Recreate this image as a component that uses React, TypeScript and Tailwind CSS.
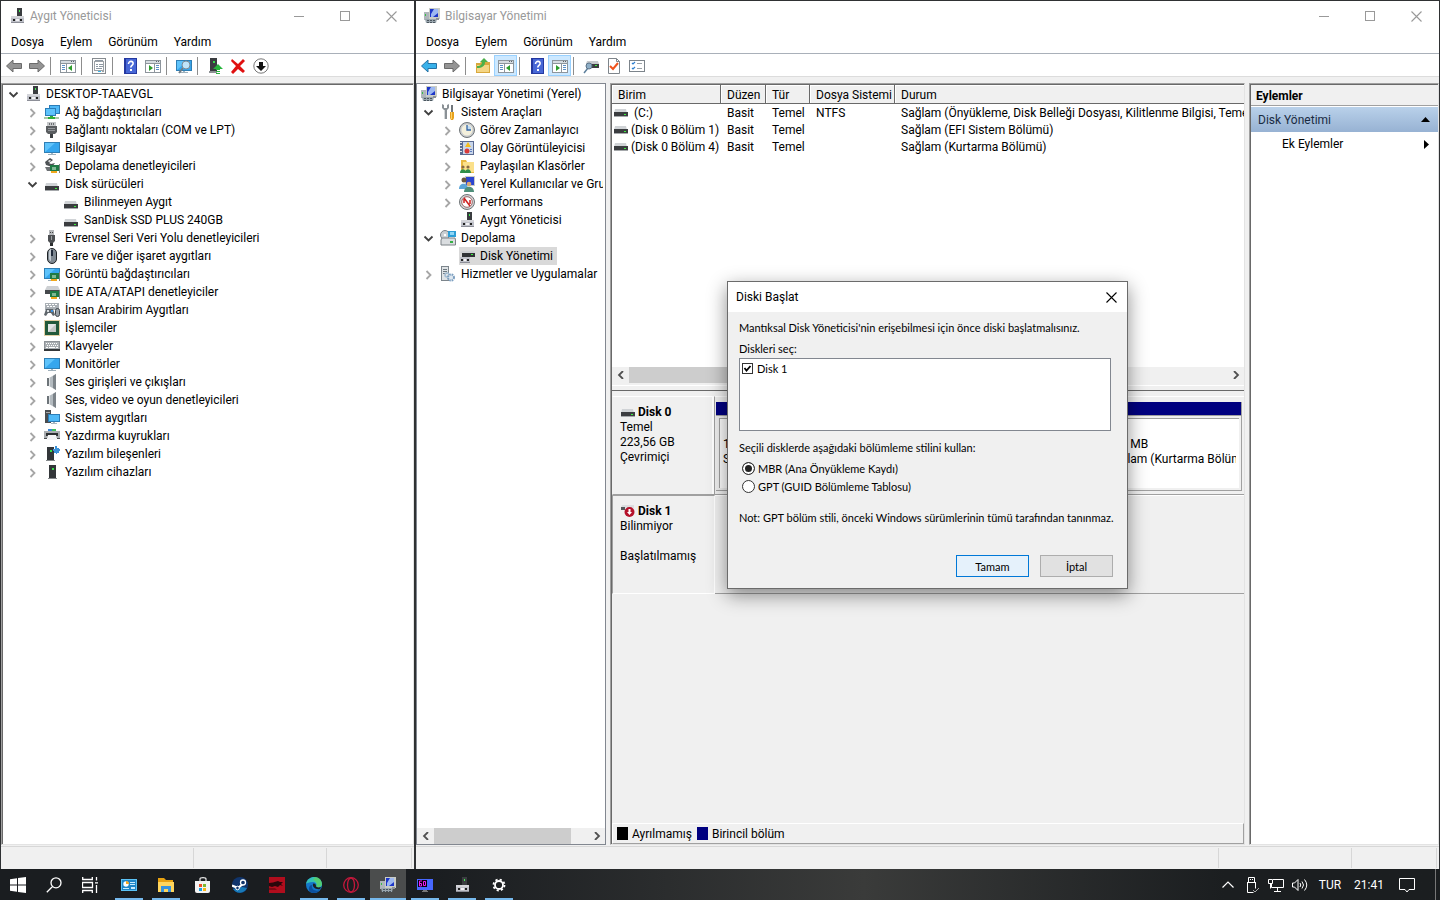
import { useState } from 'react';
import type { ReactNode } from 'react';
import clsx from 'clsx';

type IconName = keyof typeof icons;

type TreeItem = {
  label: string;
  icon: IconName;
  open?: boolean;
  selected?: boolean;
  closed?: boolean;
  children?: TreeItem[];
};

// Shared drawings
const screen = (
  <>
    <rect x="0" y="2" width="16" height="11" fill="#2f7fb5" />
    <rect x="1" y="3" width="14" height="9" fill="#5ec3fb" />
    <path d="M1 12 11 3h4v9z" fill="#35a6ee" />
    <rect x="7" y="13" width="2" height="1" fill="#9fb6c4" />
    <rect x="4" y="14" width="8" height="1" fill="#9fb0bb" />
  </>
);

const card = (
  <>
    <rect x="6" y="7" width="9" height="6" fill="#1f7a45" />
    <rect x="8" y="9" width="4" height="3" fill="#7fb894" />
    <rect x="15" y="6" width="1" height="9" fill="#7a8480" />
    <rect x="7" y="13" width="6" height="2" fill="#f0a81c" />
  </>
);

const drive = (
  <>
    <path d="M2 7h11l1 4H1z" fill="#d0d3d6" />
    <rect x="1" y="10" width="14" height="4" fill="#3b3d40" />
    <rect x="1" y="14" width="14" height="1" fill="#a5a8ab" />
    <rect x="11" y="12" width="2" height="1" fill="#3df03d" />
  </>
);

const speaker = (
  <>
    <path d="M3 4h4v8H3z" fill="#6d7479" />
    <path d="M5 4 12 0v16L5 12z" fill="#b4bbc0" />
    <path d="M9 2 12 0v16l-3-2z" fill="#7d848a" />
    <path d="M5 4h1v8H5z" fill="#e0e3e5" />
  </>
);

const tower = (
  <>
    <rect x="5" y="1" width="7" height="13" fill="#333639" />
    <rect x="8" y="4" width="2" height="2" fill="#35e04a" />
    <rect x="4" y="14" width="9" height="1" fill="#85898c" />
  </>
);

const paneFrame = (
  <>
    <rect x="0" y="2" width="16" height="13" fill="#8d959c" />
    <rect x="1" y="3" width="14" height="2" fill="#d5dbe0" />
    <rect x="11" y="3" width="1" height="1" fill="#5c646b" />
    <rect x="13" y="3" width="1" height="1" fill="#5c646b" />
    <rect x="1" y="6" width="14" height="8" fill="#fff" />
  </>
);

const manager = (
  <>
    <rect x="5" y="0" width="11" height="11" fill="#c9ccc6" />
    <rect x="6" y="1" width="8" height="8" fill="#1c35c8" />
    <path d="M10 1h4v4L9 9H7V6z" fill="#9db8f2" />
    <rect x="0" y="4" width="5" height="8" fill="#aeb5ba" />
    <rect x="1" y="6" width="1" height="2" fill="#35c046" />
    <path d="M1 11h12l-1 4H2z" fill="#9aa6ae" />
    <path d="M3 12h2v1H3zM6 12h2v1H6zM9 12h2v1H9zM3 14h2v1H3zM6 14h2v1H6zM9 14h2v1H9z" fill="#4b565e" />
    <rect x="12" y="10" width="3" height="2" fill="#8d9195" />
  </>
);

const icons = {
  device: (
    <>
      <rect x="8" y="0" width="5" height="9" fill="#3a3d40" />
      <rect x="10" y="2" width="1" height="2" fill="#3ff04f" />
      <rect x="2" y="8" width="13" height="7" fill="#bfc1c9" />
      <rect x="2" y="8" width="13" height="2" fill="#d4d5da" />
      <rect x="4" y="11" width="2" height="2" fill="#222" />
      <rect x="11" y="11" width="2" height="2" fill="#222" />
      <rect x="7" y="11" width="3" height="2" fill="#f2f2f5" />
      <rect x="2" y="14" width="13" height="1" fill="#8d8f98" />
    </>
  ),
  network: (
    <>
      <rect x="5" y="1" width="11" height="9" fill="#2b7db8" />
      <rect x="6" y="2" width="9" height="7" fill="#4fb9f7" />
      <rect x="1" y="4" width="11" height="8" fill="#2b7db8" />
      <rect x="2" y="5" width="9" height="6" fill="#5ec3fb" />
      <path d="M0 13h5v2H0zM10 13h5v2h-5z" fill="#a8c9a8" />
      <path d="M6 12h3v1h2v2H4v-2h2z" fill="#2fae37" />
    </>
  ),
  port: (
    <>
      <rect x="3" y="0" width="9" height="4" fill="#c6c8ca" />
      <path d="M5 1h1v2H5zM7 1h1v2H7zM9 1h1v2H9z" fill="#6c6f72" />
      <path d="M2 4h11v6l-2 2H4l-2-2z" fill="#5a5d60" />
      <rect x="4" y="6" width="7" height="1" fill="#93969a" />
      <rect x="4" y="8" width="7" height="1" fill="#93969a" />
      <rect x="6" y="12" width="3" height="4" fill="#3c3f42" />
    </>
  ),
  monitor: screen,
  storage: (
    <>
      <path d="M1 4 6 0l3 2-4 3 2 1 4-1-3 4-6-2z" fill="#4d5154" />
      <path d="M4 3 6 2l1 1-2 1z" fill="#fff" />
      <path d="M1 9h5v4H3z" fill="#6c7073" />
      {card}
    </>
  ),
  drive,
  // Same drive, sitting in the middle of a text line
  volume: <g transform="translate(0 -3)">{drive}</g>,
  usb: (
    <>
      <rect x="5" y="0" width="5" height="5" fill="#b6b9bc" />
      <path d="M6 2h1v1H6zM8 2h1v1H8z" fill="#444" />
      <path d="M4 5h7v6l-2 2H6l-2-2z" fill="#4c4f52" />
      <rect x="7" y="6" width="1" height="4" fill="#9ba0a3" />
      <rect x="6" y="13" width="3" height="3" fill="#2c2e30" />
    </>
  ),
  mouse: (
    <>
      <rect x="3.5" y="0.5" width="9" height="15" rx="4.5" fill="#7f8992" stroke="#1f2326" />
      <path d="M5 4c0-2 1-3 2-3v12c-1 0-2-1-2-3z" fill="#c5ccd2" />
      <rect x="7" y="2" width="2" height="6" fill="#1f2a3a" />
    </>
  ),
  display: (
    <>
      {screen}
      {card}
    </>
  ),
  ide: (
    <>
      <path d="M3 2h11l2 4H1z" fill="#cdd0d3" />
      <rect x="1" y="6" width="14" height="4" fill="#46494c" />
      {card}
    </>
  ),
  hid: (
    <>
      <rect x="1" y="1" width="14" height="7" fill="#aab0b5" />
      <path d="M2 2h2v1H2zM5 2h2v1H5zM8 2h2v1H8zM11 2h2v1h-2zM3 4h2v1H3zM6 4h2v1H6zM9 4h2v1H9z" fill="#fff" />
      <path d="M2 7h7l2 6-2 1-2-3H4l-2 3-2-1z" fill="#5f666c" />
      <rect x="3" y="8" width="2" height="2" fill="#d8dde0" />
      <rect x="7" y="8" width="2" height="2" fill="#3a91e0" />
      <rect x="11.500" y="6.500" width="4" height="8" rx="2" fill="#9aa2a9" stroke="#3f464b" />
    </>
  ),
  cpu: (
    <>
      <rect x="0.500" y="0.500" width="15" height="15" fill="none" stroke="#c7a04a" strokeDasharray="1 1" />
      <rect x="1" y="1" width="14" height="14" fill="#22593a" />
      <rect x="4" y="4" width="8" height="8" fill="#c4c7c5" />
      <path d="M4 12 12 4H4z" fill="#e4e6e5" />
    </>
  ),
  keyboard: (
    <>
      <rect x="0" y="3" width="16" height="10" fill="#8d9297" />
      <rect x="1" y="4" width="14" height="7" fill="#a9aeb2" />
      <rect x="0" y="11" width="16" height="2" fill="#33373a" />
      <path d="M2 5h1v1H2zM4 5h1v1H4zM6 5h1v1H6zM8 5h1v1H8zM10 5h1v1h-1zM12 5h1v1h-1zM3 7h1v1H3zM5 7h1v1H5zM7 7h1v1H7zM9 7h1v1H9zM11 7h1v1h-1zM13 7h1v1h-1zM2 9h2v1H2zM5 9h6v1H5zM12 9h2v1h-2z" fill="#fff" />
    </>
  ),
  speaker,
  system: (
    <>
      <rect x="1" y="0" width="6" height="13" fill="#4a4d50" />
      <rect x="2" y="2" width="4" height="1" fill="#a6a9ac" />
      <rect x="4" y="4" width="12" height="8" fill="#2b7db8" />
      <rect x="5" y="5" width="10" height="6" fill="#4fb9f7" />
      <path d="M9 12h2v1h2v1H7v-1h2z" fill="#a9b7c0" />
    </>
  ),
  printer: (
    <>
      <rect x="4" y="1" width="8" height="3" fill="#3a86d8" />
      <rect x="8" y="1" width="4" height="2" fill="#3fc05a" />
      <rect x="0" y="3" width="16" height="7" fill="#a9adb0" />
      <rect x="2" y="5" width="12" height="3" fill="#2c2f31" />
      <path d="M4 7h8l1 5H3z" fill="#f3f4f5" />
      <path d="M0 10h3v1H0zM13 10h3v1h-3z" fill="#4a4d50" />
    </>
  ),
  component: (
    <>
      <g transform="translate(-2 0)">{tower}</g>
      <path d="M11 0h2v2h2v1h1v2h-1v2h-2v1h-1V7h-2V5H9V3h2z" fill="#3c93d8" />
    </>
  ),
  tower,
  manager,
  tools: (
    <>
      <path d="M2 0v4l2 2v9h3V6l2-2V0L7 1v3H4V1z" fill="#8b9196" />
      <path d="M4 6h1v9H4z" fill="#d5d8da" />
      <path d="M11 1h2v7h-2z" fill="#70767b" />
      <path d="M10 8h4v6l-1 2h-2l-1-2z" fill="#e8a11c" />
      <path d="M11 8h1v7h-1z" fill="#f9d36b" />
    </>
  ),
  clock: (
    <>
      <circle cx="8" cy="8" r="7.500" fill="#c9ccce" stroke="#6e7376" />
      <circle cx="8" cy="8" r="5.500" fill="#f4f0dc" />
      <path d="M8 8V3l4 2v3z" fill="#c3dcf2" />
      <path d="M8 3v5h4" fill="none" stroke="#3465a4" strokeWidth="1.300" />
    </>
  ),
  events: (
    <>
      <rect x="1" y="1" width="14" height="14" fill="#5a6a92" />
      <rect x="4" y="2" width="10" height="12" fill="#c9d6ea" />
      <path d="M1 2h2v1H1zM1 5h2v1H1zM1 8h2v1H1zM1 11h2v1H1z" fill="#e5e5e5" />
      <path d="M9 2 12 7H6z" fill="#f5bd1e" />
      <circle cx="8" cy="11" r="2.500" fill="#d93a3a" />
      <path d="M11 9h2v1h-2zM11 11h2v1h-2z" fill="#5d7cc0" />
    </>
  ),
  shared: (
    <>
      <path d="M2 2h5l1 2h7v11H2z" fill="#e9b942" />
      <path d="M4 4h11v10H4z" fill="#fbe08a" />
      <circle cx="4" cy="9" r="1.600" fill="#8a6a45" />
      <circle cx="9" cy="9" r="1.600" fill="#8a6a45" />
      <path d="M1 15c0-5 6-5 6 0zM6 15c0-5 6-5 6 0z" fill="#2f8e4a" />
    </>
  ),
  users: (
    <>
      <rect x="6" y="0" width="10" height="10" fill="#c9ccc6" />
      <rect x="7" y="1" width="8" height="8" fill="#2b45d0" />
      <circle cx="5" cy="4" r="2.500" fill="#6b563f" />
      <path d="M0 13c0-7 9-7 9 0z" fill="#5aa5d8" />
      <circle cx="10" cy="8" r="2.300" fill="#d9a873" />
      <path d="M5 16c0-7 10-7 10 0z" fill="#4f8f7a" />
    </>
  ),
  performance: (
    <>
      <circle cx="8" cy="8" r="7.500" fill="#d2d4d6" stroke="#6e7376" />
      <circle cx="8" cy="8" r="5.300" fill="#fff" stroke="#8d4a4a" strokeWidth=".8" />
      <path d="M5 4 11 12M5 5v4M11 6v4" fill="none" stroke="#cf2020" strokeWidth="1.500" />
    </>
  ),
  depot: (
    <>
      <circle cx="5" cy="5" r="4.500" fill="#c9ced2" stroke="#7b8287" />
      <circle cx="5" cy="5" r="1.200" fill="#fff" />
      <rect x="8" y="1" width="8" height="6" fill="#2e9ed6" />
      <rect x="10" y="2" width="4" height="3" fill="#8fd6f6" />
      <path d="M2 8h13l.5 2v5H1v-5z" fill="#dadde0" stroke="#7c8287" />
      <rect x="10" y="11" width="3" height="2" fill="#35b045" />
    </>
  ),
  diskManager: (
    <>
      <path d="M3 3h12l1 2H1z" fill="#cdd0d3" />
      <rect x="3" y="5" width="13" height="4" fill="#303336" />
      <rect x="12" y="6" width="2" height="1" fill="#3df03d" />
      <rect x="1" y="9" width="10" height="6" fill="#bfc1c9" />
      <rect x="2" y="11" width="2" height="2" fill="#222" />
      <rect x="8" y="11" width="2" height="2" fill="#222" />
      <rect x="5" y="11" width="2" height="2" fill="#f5f5f7" />
      <rect x="1" y="14" width="10" height="1" fill="#8d8f98" />
    </>
  ),
  services: (
    <>
      <rect x="1.500" y="0.500" width="7" height="14" fill="#dfe3e6" stroke="#7c858c" />
      <path d="M3 3h4v1H3zM3 5h4v1H3zM3 7h4v1H3z" fill="#6d7880" />
      <circle cx="7" cy="9" r="2" fill="none" stroke="#a3bcd2" strokeWidth="1.500" />
      <circle cx="11" cy="11.500" r="3" fill="#dfe8f0" stroke="#7c9fc0" strokeWidth="2" strokeDasharray="1.600 .8" />
    </>
  ),
  back: <path d="M.5 8 7 2v3.500h8.500v5H7V14z" fill="#949494" stroke="#6b6b6b" />,
  backBlue: <path d="M.5 8 7 2v3.500h8.500v5H7V14z" fill="#38b1ea" stroke="#2572a5" />,
  forward: <path d="M15.500 8 9 2v3.500H.5v5H9V14z" fill="#949494" stroke="#6b6b6b" />,
  treePane: (
    <>
      {paneFrame}
      <path d="M2 7h3v1H2zM2 9h3v1H2zM2 11h3v1H2z" fill="#5b8fc7" />
      <rect x="6" y="6" width="1" height="8" fill="#8d959c" />
      <path d="M12 7v6L8 10z" fill="#2c9c2c" />
    </>
  ),
  actionPane: (
    <>
      {paneFrame}
      <path d="M11 7h3v1h-3zM11 9h3v1h-3zM11 11h3v1h-3z" fill="#5b8fc7" />
      <rect x="9" y="6" width="1" height="8" fill="#8d959c" />
      <path d="M4 7v6l4-3z" fill="#2c9c2c" />
    </>
  ),
  properties: (
    <>
      <rect x="1.500" y="0.500" width="13" height="15" fill="#fbfbfb" stroke="#868b90" />
      <rect x="3.500" y="3.500" width="9" height="9" fill="#fff" stroke="#9da2a7" />
      <path d="M4 2h8v1H4zM5 6h2v1H5zM8 6h4v1H8zM5 8h2v1H5zM8 8h4v1H8zM5 10h6v1H5z" fill="#8d98a3" />
      <rect x="7" y="13" width="3" height="1" fill="#35b8ec" />
      <rect x="11" y="13" width="2" height="1" fill="#9da2a7" />
    </>
  ),
  help: (
    <>
      <rect x="2" y="0" width="13" height="16" fill="#2438a0" />
      <rect x="4" y="1" width="10" height="14" fill="#4767d6" />
      <path d="M6.500 6c0-3.700 5.500-3.200 4.500 0-.5 1.500-2.200 1.500-2.200 3.500" fill="none" stroke="#fff" strokeWidth="1.600" />
      <rect x="8" y="11" width="2" height="2" fill="#fff" />
    </>
  ),
  scan: (
    <>
      {screen}
      <path d="M7 10 3 15" stroke="#6f7c86" strokeWidth="2" />
      <circle cx="10" cy="7" r="4" fill="#bfe4fa" stroke="#7b8a95" />
    </>
  ),
  update: (
    <>
      <rect x="3" y="0" width="7" height="13" fill="#3a3d40" />
      <rect x="6" y="3" width="2" height="2" fill="#35e04a" />
      <rect x="2" y="13" width="8" height="2" fill="#8d9194" />
      <path d="M11 6 16 11h-3v1H9v-1H6zM9 13h4v1H9zM9 15h4v1H9z" fill="#27b53c" />
    </>
  ),
  remove: <path d="M2 1 8 6l5-5 2 2-5 5 5 5-2 2-5-4-5 5-2-2 5-6-5-5z" fill="#e01010" />,
  disable: (
    <>
      <circle cx="8" cy="8" r="7.200" fill="#fff" stroke="#777" />
      <path d="M6 4h4v4h3l-5 5-5-5h3z" fill="#111" />
    </>
  ),
  folderUp: (
    <>
      <path d="M1 5h4l1-1h9v11H1z" fill="#d9a83c" />
      <path d="M2 7h12v7H2z" fill="#f4d584" />
      <path d="M2 8c4 0 5-2 5-4H5l4-4 4 4h-3c0 4-3 6-8 6z" fill="#4bb04a" />
    </>
  ),
  rescan: (
    <>
      <path d="M4 3h11l1 3H3z" fill="#c6c9cc" />
      <rect x="3" y="6" width="13" height="4" fill="#3b3d40" />
      <rect x="12" y="7" width="2" height="1" fill="#3df03d" />
      <path d="M5 10 1 15" stroke="#5c7f9c" strokeWidth="1.500" />
      <circle cx="6" cy="8" r="3" fill="#8eaec6" stroke="#5b7388" />
    </>
  ),
  checkPage: (
    <>
      <path d="M2.500.5h8l3 3v12h-11z" fill="#fff" stroke="#7e858b" />
      <path d="M10.500.5v3h3" fill="none" stroke="#7e858b" />
      <path d="M4 8 7 11l5-6" fill="none" stroke="#f0531c" strokeWidth="2" />
    </>
  ),
  checkList: (
    <>
      <rect x="0.500" y="2.500" width="15" height="11" fill="#fff" stroke="#7c848b" />
      <path d="M3 5 4 6l2-2M3 10l1 1 2-2" fill="none" stroke="#2d7fd0" strokeWidth="1.200" />
      <path d="M8 5h5v1H8zM8 10h5v1H8z" fill="#9aa1a7" />
    </>
  ),
  unknownDrive: (
    <>
      <path d="M2 1h12v3H1z" fill="#dcdee0" />
      <rect x="1" y="3" width="4" height="3" fill="#56595c" />
      <circle cx="9.500" cy="8" r="5" fill="#b5122b" />
      <path d="M8.500 5h2v3H12l-2.500 3L7 8h1.500z" fill="#fff" />
    </>
  ),
  start: <path d="M0 2.200 7 1.200V7.500H0zM8 1 16 0v7.500H8zM0 8.500h7v6.300l-7-1zM8 8.500h8V16l-8-1z" fill="#fff" />,
  search: <path d="M10 .8a5 5 0 1 1 0 10 5 5 0 0 1 0-10zM6.500 9.500.8 15.200" fill="none" stroke="#fff" strokeWidth="1.300" />,
  taskView: (
    <path
      d="M.7 0v2.500h9.600V0M.7 16v-2.500h9.600V16M.5 5.500h10v5H.5zM14.500 0v3.500M14.500 8v8M13 5.800h3"
      fill="none"
      stroke="#fff"
      strokeWidth="1.300"
    />
  ),
  panel: (
    <>
      <rect x="0" y="2" width="16" height="12" fill="#5cc2f5" />
      <rect x="1" y="3" width="14" height="10" fill="#1f86c8" />
      <circle cx="5" cy="7" r="2.700" fill="#fff" />
      <path d="M5 7V4a3 3 0 0 1 3 3z" fill="#f5a623" />
      <path d="M9 5h5v1H9zM9 7h5v1H9zM2 11h6v1H2zM10 10h4v2h-4z" fill="#c9ecff" />
    </>
  ),
  explorer: (
    <>
      <path d="M0 1h6l2 2h7v4H0z" fill="#e8a211" />
      <path d="M0 5h16v10H0z" fill="#ffd55c" />
      <path d="M3 9h10v6h-3v-3H6v3H3z" fill="#3793dc" />
    </>
  ),
  store: (
    <>
      <path d="M5 5V2q0-1.300 3-1.300T11 2v3" fill="none" stroke="#e8e8e8" strokeWidth="1.200" />
      <path d="M0 4h15v10q0 2-2 2H2q-2 0-2-2z" fill="#f3f3f3" />
      <path d="M4 7h3v3H4z" fill="#f04e23" />
      <path d="M8 7h3v3H8z" fill="#7cb82f" />
      <path d="M4 11h3v3H4z" fill="#1ba1e2" />
      <path d="M8 11h3v3H8z" fill="#fbb616" />
    </>
  ),
  steam: (
    <>
      <circle cx="8" cy="8" r="8" fill="#10346b" />
      <path d="M1 12a8 8 0 0 0 14-1l-5-1z" fill="#1879b8" />
      <path d="M0 8.500 6 11l6-5" fill="none" stroke="#fff" strokeWidth="2.200" />
      <circle cx="11" cy="5.500" r="2.500" fill="#10346b" stroke="#fff" strokeWidth="1.300" />
      <circle cx="5.500" cy="11" r="1.800" fill="#10346b" stroke="#fff" />
    </>
  ),
  redGame: (
    <>
      <rect width="16" height="16" fill="#b00d1d" />
      <path d="M0 6 4 5.500 9 4l2 1 3 0-2 2 2 2-3-1-2 2-3-1-3 1-3-1z" fill="#2a070b" />
      <path d="M0 11h6l2 2H0z" fill="#7c0913" />
    </>
  ),
  edge: (
    <>
      <circle cx="8" cy="8" r="8" fill="#1477c9" />
      <path d="M0 7C1 2 5 0 8 0c5 0 8 4 8 7.500 0 3-4 4-6 2.500 1-1 1-5-3-5S1 6 0 7z" fill="#35c1b6" />
      <path d="M9 0c4 0 7 3 7 7.500-1 3-4 3-6 2.500 2-3 0-6-3-7z" fill="#5fd35a" opacity=".7" />
      <path d="M6 8c-1 4 3 7 8 5-3 4-10 4-11 0-.5-3 1-5 3-5z" fill="#0c4f9e" />
      <path d="M7 7c1-1 3 0 3 2 0 1 2 2 5 1l-1 2c-4 1-8-2-7-5z" fill="#1b2024" />
    </>
  ),
  opera: (
    <>
      <circle cx="8" cy="8" r="7.300" fill="none" stroke="#c4183c" strokeWidth="1.300" />
      <ellipse cx="8" cy="8" rx="3.500" ry="7" fill="none" stroke="#c4183c" strokeWidth="1.300" />
    </>
  ),
  counter: (
    <>
      <rect x="0" y="2" width="16" height="11" fill="#4768ff" />
      <rect x="1" y="3" width="9" height="7" fill="#08000c" />
      <path d="M5 4H2.500v5h2V6.500h-2M6.500 4.500h2v4h-2z" fill="none" stroke="#f01cf0" />
      <path d="M6 13h4v1h1v1H5v-1h1z" fill="#777" />
    </>
  ),
  settings: (
    <>
      <circle cx="8" cy="8" r="4" fill="none" stroke="#fff" strokeWidth="1.800" />
      <circle cx="8" cy="8" r="5.500" fill="none" stroke="#fff" strokeWidth="1.800" strokeDasharray="2.160 2.160" />
    </>
  ),
};

function Icon({ name, className }: { name: IconName; className?: string }) {
  return (
    <svg viewBox="0 0 16 16" className={clsx('size-4 shrink-0', className)} aria-hidden="true">
      {icons[name]}
    </svg>
  );
}

const SUNKEN =
  'border border-t-[#a0a0a0] border-l-[#a0a0a0] border-r-[#e3e3e3] border-b-[#e3e3e3] pt-px pl-px shadow-[inset_1px_1px_0_#696969]';

function Chevron({ open }: { open: boolean }) {
  return (
    <svg viewBox="0 0 16 16" className="size-4" aria-hidden="true">
      {open ? (
        <path d="M3.500 6.500 7.500 10.500l4-4" fill="none" stroke="#404040" strokeWidth="1.800" />
      ) : (
        <path d="M5.500 5l4 4-4 4" fill="none" stroke="#a6a6a6" strokeWidth="1.800" />
      )}
    </svg>
  );
}

function TreeNode({ item }: { item: TreeItem }) {
  const [open, setOpen] = useState(!!item.open);
  const expandable = item.closed || item.children;

  return (
    <li>
      <div className="flex h-[18px] items-center gap-[3px] whitespace-nowrap">
        {expandable ? (
          <button className="size-4 shrink-0" aria-label={item.label} aria-expanded={open} onClick={() => setOpen(!open)}>
            <Chevron open={open} />
          </button>
        ) : (
          <span className="w-4 shrink-0" />
        )}
        <span className={clsx('flex h-full items-center gap-[5px] pr-1', item.selected && 'bg-[#d9d9d9]')}>
          <Icon name={item.icon} />
          {item.label}
        </span>
      </div>
      {open && item.children && (
        <ul className="pl-[19px]">
          {item.children.map((child) => (
            <TreeNode key={child.label} item={child} />
          ))}
        </ul>
      )}
    </li>
  );
}

const deviceTree: TreeItem = {
  label: 'DESKTOP-TAAEVGL',
  icon: 'device',
  open: true,
  children: [
    { label: 'Ağ bağdaştırıcıları', icon: 'network', closed: true },
    { label: 'Bağlantı noktaları (COM ve LPT)', icon: 'port', closed: true },
    { label: 'Bilgisayar', icon: 'monitor', closed: true },
    { label: 'Depolama denetleyicileri', icon: 'storage', closed: true },
    {
      label: 'Disk sürücüleri',
      icon: 'drive',
      open: true,
      children: [
        { label: 'Bilinmeyen Aygıt', icon: 'drive' },
        { label: 'SanDisk SSD PLUS 240GB', icon: 'drive' },
      ],
    },
    { label: 'Evrensel Seri Veri Yolu denetleyicileri', icon: 'usb', closed: true },
    { label: 'Fare ve diğer işaret aygıtları', icon: 'mouse', closed: true },
    { label: 'Görüntü bağdaştırıcıları', icon: 'display', closed: true },
    { label: 'IDE ATA/ATAPI denetleyiciler', icon: 'ide', closed: true },
    { label: 'İnsan Arabirim Aygıtları', icon: 'hid', closed: true },
    { label: 'İşlemciler', icon: 'cpu', closed: true },
    { label: 'Klavyeler', icon: 'keyboard', closed: true },
    { label: 'Monitörler', icon: 'monitor', closed: true },
    { label: 'Ses girişleri ve çıkışları', icon: 'speaker', closed: true },
    { label: 'Ses, video ve oyun denetleyicileri', icon: 'speaker', closed: true },
    { label: 'Sistem aygıtları', icon: 'system', closed: true },
    { label: 'Yazdırma kuyrukları', icon: 'printer', closed: true },
    { label: 'Yazılım bileşenleri', icon: 'component', closed: true },
    { label: 'Yazılım cihazları', icon: 'tower', closed: true },
  ],
};

const managementTree: TreeItem[] = [
  {
    label: 'Sistem Araçları',
    icon: 'tools',
    open: true,
    children: [
      { label: 'Görev Zamanlayıcı', icon: 'clock', closed: true },
      { label: 'Olay Görüntüleyicisi', icon: 'events', closed: true },
      { label: 'Paylaşılan Klasörler', icon: 'shared', closed: true },
      { label: 'Yerel Kullanıcılar ve Gruplar', icon: 'users', closed: true },
      { label: 'Performans', icon: 'performance', closed: true },
      { label: 'Aygıt Yöneticisi', icon: 'device' },
    ],
  },
  {
    label: 'Depolama',
    icon: 'depot',
    open: true,
    children: [{ label: 'Disk Yönetimi', icon: 'diskManager', selected: true }],
  },
  { label: 'Hizmetler ve Uygulamalar', icon: 'services', closed: true },
];

const volumes = [
  { name: ' (C:)', layout: 'Basit', type: 'Temel', fs: 'NTFS', status: 'Sağlam (Önyükleme, Disk Belleği Dosyası, Kilitlenme Bilgisi, Temel Veri Bölümü)' },
  { name: '(Disk 0 Bölüm 1)', layout: 'Basit', type: 'Temel', fs: '', status: 'Sağlam (EFI Sistem Bölümü)' },
  { name: '(Disk 0 Bölüm 4)', layout: 'Basit', type: 'Temel', fs: '', status: 'Sağlam (Kurtarma Bölümü)' },
];

type Tool = { icon: IconName; label: string; active?: boolean } | null;

const deviceTools: Tool[] = [
  { icon: 'back', label: 'Geri' },
  { icon: 'forward', label: 'İleri' },
  null,
  { icon: 'treePane', label: 'Konsol ağacı' },
  null,
  { icon: 'properties', label: 'Özellikler' },
  null,
  { icon: 'help', label: 'Yardım' },
  { icon: 'actionPane', label: 'Eylem bölmesi' },
  null,
  { icon: 'scan', label: 'Donanım değişikliklerini tara' },
  null,
  { icon: 'update', label: 'Sürücüyü güncelleştir' },
  { icon: 'remove', label: 'Aygıtı kaldır' },
  { icon: 'disable', label: 'Aygıtı devre dışı bırak' },
];

const managementTools: Tool[] = [
  { icon: 'backBlue', label: 'Geri' },
  { icon: 'forward', label: 'İleri' },
  null,
  { icon: 'folderUp', label: 'Bir düzey yukarı' },
  { icon: 'treePane', label: 'Konsol ağacı', active: true },
  null,
  { icon: 'help', label: 'Yardım' },
  { icon: 'actionPane', label: 'Eylem bölmesi', active: true },
  null,
  { icon: 'rescan', label: 'Yenile' },
  { icon: 'checkPage', label: 'Özellikler' },
  { icon: 'checkList', label: 'Ayarlar' },
];

function Window({ title, icon, tools, children }: { title: string; icon: IconName; tools: Tool[]; children: ReactNode }) {
  return (
    <section className="relative flex min-w-0 flex-col overflow-hidden bg-[#f0f0f0]">
      <header className="flex h-[30px] items-center bg-white pl-2 text-[#999]">
        <Icon name={icon} />
        <h1 className="flex-1 pl-[5px]">{title}</h1>
        <button className="flex h-full w-[46px] items-center justify-center" aria-label="Simge durumuna küçült">
          <span className="h-px w-[10px] bg-[#999]" />
        </button>
        <button className="flex h-full w-[46px] items-center justify-center" aria-label="Ekranı kapla">
          <span className="size-[10px] border border-[#999]" />
        </button>
        <button className="flex h-full w-[46px] items-center justify-center" aria-label="Kapat">
          <Cross />
        </button>
      </header>
      <nav className="flex h-[22px] items-center gap-4 bg-white pl-[10px]">
        {['Dosya', 'Eylem', 'Görünüm', 'Yardım'].map((item) => (
          <button key={item}>{item}</button>
        ))}
      </nav>
      <div className="flex h-6 items-end border-t border-b border-t-[#a9b0b9] border-b-[#dcdcdc] bg-white pl-px">
        {tools.map((tool, i) =>
          tool ? (
            <button
              key={i}
              aria-label={tool.label}
              className={clsx(
                'flex h-[21px] w-[23px] items-end justify-center pb-[2px]',
                tool.active && 'bg-[#cce8ff] shadow-[inset_0_0_0_1px_#99d1ff]',
              )}
            >
              <Icon name={tool.icon} />
            </button>
          ) : (
            <span key={i} className="mr-[5px] mb-px ml-[2px] h-[18px] w-px bg-[#8d8d8d]" />
          ),
        )}
      </div>
      <div className="flex min-h-0 flex-1 gap-1 pt-[6px] pb-px">{children}</div>
      <footer className="flex h-[23px] justify-end border-t border-[#d7d7d7] py-px">
        <span className="w-[133px] border-l border-[#d7d7d7]" />
        <span className="w-[85px] border-l border-[#d7d7d7]" />
        <span className="w-[3px] border-l border-[#d7d7d7]" />
      </footer>
    </section>
  );
}

function Cross() {
  return (
    <svg viewBox="0 0 11 11" className="size-[11px]" aria-hidden="true">
      <path d="M.5.5l10 10M10.500.5l-10 10" stroke="currentColor" strokeWidth="1.100" />
    </svg>
  );
}

function ScrollBar({ thumb }: { thumb: string }) {
  return (
    <div className="flex h-4 items-stretch bg-[#f0f0f0]">
      <button className="flex w-[17px] items-center justify-center" aria-label="Sola kaydır">
        <svg viewBox="0 0 8 8" className="size-2">
          <path d="M6 0 2 4l4 4" fill="none" stroke="#505050" strokeWidth="1.800" />
        </svg>
      </button>
      <div className="flex-1">
        <div className="h-full bg-[#cdcdcd]" style={{ width: thumb }} />
      </div>
      <button className="flex w-[17px] items-center justify-center" aria-label="Sağa kaydır">
        <svg viewBox="0 0 8 8" className="size-2">
          <path d="M2 0l4 4-4 4" fill="none" stroke="#505050" strokeWidth="1.800" />
        </svg>
      </button>
    </div>
  );
}

function VolumeTable() {
  const columns = ['Birim', 'Düzen', 'Tür', 'Dosya Sistemi', 'Durum'];
  return (
    <table className="w-full table-fixed border-separate border-spacing-0 whitespace-nowrap">
      <colgroup>
        <col className="w-[109px]" />
        <col className="w-[45px]" />
        <col className="w-[44px]" />
        <col className="w-[85px]" />
        <col />
      </colgroup>
      <thead>
        <tr className="bg-[#f0f0f0]">
          {columns.map((name, i) => (
            <th
              key={name}
              className={clsx(
                'h-[19px] border-b border-[#696969] pt-px pl-[6px] text-left font-normal shadow-[inset_1px_1px_0_#fff]',
                i < 4 && 'border-r',
              )}
            >
              {name}
            </th>
          ))}
        </tr>
      </thead>
      <tbody>
        {volumes.map((v) => (
          <tr key={v.name} className="h-[17px]">
            <td className="pl-px">
              <span className="flex items-center gap-[2px]">
                <Icon name="volume" />
                <span className="whitespace-pre">{v.name}</span>
              </span>
            </td>
            <td className="pl-[6px]">{v.layout}</td>
            <td className="pl-[6px]">{v.type}</td>
            <td className="pl-[6px]">{v.fs}</td>
            <td className="overflow-hidden pl-[6px]">{v.status}</td>
          </tr>
        ))}
      </tbody>
    </table>
  );
}

function Partition({ lines = [], className }: { lines?: string[]; className?: string }) {
  return (
    <div className={clsx('flex min-w-0 flex-col border-r border-b border-[#a0a0a0]', className)}>
      <div className="h-[14px] border-b border-[#a0a0a0] bg-[#000080]" />
      <div className="mt-[2px] mr-[2px] mb-[2px] ml-[3px] flex-1 overflow-hidden border-t border-l border-[#a0a0a0] bg-white px-[3px] pt-[18px] leading-[15px] whitespace-nowrap">
        {lines.map((line) => (
          <p key={line} className="overflow-hidden">
            {line}
          </p>
        ))}
      </div>
    </div>
  );
}

function DiskLabel({ icon, name, lines, raised }: { icon: IconName; name: string; lines: string[]; raised?: boolean }) {
  return (
    <div
      className={clsx(
        'w-[103px] shrink-0 border pt-2 pl-[7px] leading-[15px]',
        raised
          ? 'border-t-white border-r-[#a0a0a0] border-b-[#a0a0a0] border-l-[#f0f0f0] shadow-[inset_-2px_0_0_#fff]'
          : 'border-t-[#a0a0a0] border-r-white border-b-white border-l-[#a0a0a0]',
      )}
    >
      <div className="flex h-[15px] items-center gap-[2px] font-bold">
        <Icon name={icon} />
        {name}
      </div>
      {lines.map((line, i) => (
        <p key={i} className="h-[15px]">
          {line}
        </p>
      ))}
    </div>
  );
}

function DiskPane() {
  return (
    <div className={clsx('flex min-w-0 flex-1 flex-col overflow-hidden bg-[#f0f0f0]', SUNKEN)}>
      <div className="flex h-[300px] flex-col bg-white">
        <div className="flex-1 overflow-hidden">
          <VolumeTable />
        </div>
        <ScrollBar thumb="75%" />
        <div className="h-[2px] bg-[#f0f0f0]" />
      </div>
      <div className="h-[6px] border-t border-b border-t-white border-b-[#696969]" />
      <div className="mt-[5px] flex h-[99px]">
        <DiskLabel icon="volume" name="Disk 0" lines={['Temel', '223,56 GB', 'Çevrimiçi']} raised />
        <div className="flex min-w-0 flex-1 gap-px border-t border-b border-t-white border-b-[#a0a0a0] pt-[5px] pr-[2px] pb-[3px] pl-px">
          <Partition lines={['100 MB', 'Sağlam']} className="w-[100px]" />
          <Partition className="flex-1" />
          <Partition lines={['508 MB', 'Sağlam (Kurtarma Bölümü)']} className="w-[142px]" />
        </div>
      </div>
      <div className="flex h-[99px]">
        <DiskLabel icon="unknownDrive" name="Disk 1" lines={['Bilinmiyor', '', 'Başlatılmamış']} />
        <div className="flex-1 border-t border-b border-t-white border-b-[#a0a0a0]" />
      </div>
      <div className="flex-1" />
      <div className="flex h-[21px] items-center border border-t-white border-r-[#a0a0a0] border-b-[#a0a0a0] border-l-white pl-1">
        <span className="mr-1 h-[13px] w-[11px] bg-black" />
        Ayrılmamış
        <span className="mr-1 ml-[5px] h-[13px] w-[11px] bg-[#000080]" />
        Birincil bölüm
      </div>
    </div>
  );
}

function ActionsPane() {
  return (
    <aside className={clsx('w-[190px] shrink-0 bg-white', SUNKEN)}>
      <h2 className="flex h-[21px] items-center border-b border-[#a0a0a0] bg-[#f0f0f0] pt-px pl-[5px] font-bold">Eylemler</h2>
      <button className="mt-px flex h-[25px] w-full items-center justify-between bg-linear-to-b from-[#b9d1ea] to-[#97b2d3] pr-2 pl-[7px] text-[#1a2b42]">
        Disk Yönetimi
        <svg viewBox="0 0 9 5" className="h-[5px] w-[9px]">
          <path d="M4.500 0 9 5H0z" fill="#000" />
        </svg>
      </button>
      <button className="flex h-6 w-full items-center justify-between pr-[9px] pl-[31px]">
        Ek Eylemler
        <svg viewBox="0 0 5 9" className="h-[9px] w-[5px]">
          <path d="M0 0 5 4.500 0 9z" fill="#000" />
        </svg>
      </button>
    </aside>
  );
}

function InitializeDiskDialog() {
  const [style, setStyle] = useState('mbr');
  const styles = [
    { id: 'mbr', label: 'MBR (Ana Önyükleme Kaydı)' },
    { id: 'gpt', label: 'GPT (GUID Bölümleme Tablosu)' },
  ];

  return (
    <div className="absolute inset-0 flex items-center justify-center">
      <form
        role="dialog"
        aria-labelledby="dialog-title"
        className="w-[401px] border border-[#6b6b6b] bg-[#f0f0f0] font-['Lato',sans-serif] text-[11px] leading-[15px] whitespace-nowrap shadow-[0_6px_18px_rgba(0,0,0,0.45)]"
        onSubmit={(e) => e.preventDefault()}
      >
        <div className="flex h-[30px] items-center justify-between bg-white pr-[10px] pl-2 font-['Roboto',sans-serif] text-[12px]">
          <h2 id="dialog-title">Diski Başlat</h2>
          <button type="button" aria-label="Kapat">
            <Cross />
          </button>
        </div>
        <div className="pt-2 pr-[14px] pb-[11px] pl-[11px]">
          <p>Mantıksal Disk Yöneticisi'nin erişebilmesi için önce diski başlatmalısınız.</p>
          <p className="mt-[6px]">Diskleri seç:</p>
          <div className="mt-[2px] mr-[2px] h-[73px] border border-[#828790] bg-white pt-[2px] pl-[2px]">
            <label className="relative flex items-center gap-1">
              <input type="checkbox" defaultChecked className="peer size-[11px] appearance-none border border-[#333] bg-white" />
              <svg viewBox="0 0 11 11" className="pointer-events-none absolute left-0 hidden size-[11px] peer-checked:block">
                <path d="M2.500 5 4.500 7.500 8.500 3" fill="none" stroke="#000" strokeWidth="1.800" />
              </svg>
              Disk 1
            </label>
          </div>
          <fieldset className="mt-[9px]">
            <legend>Seçili disklerde aşağıdaki bölümleme stilini kullan:</legend>
            <div className="pt-1 pl-[3px]">
              {styles.map((s) => (
                <label key={s.id} className="flex h-[18px] items-center gap-[3px]">
                  <input
                    type="radio"
                    name="style"
                    checked={style === s.id}
                    onChange={() => setStyle(s.id)}
                    className="size-[13px] appearance-none rounded-full border border-[#333] bg-white shadow-[inset_0_0_0_2px_#fff] checked:bg-[#222]"
                  />
                  {s.label}
                </label>
              ))}
            </div>
          </fieldset>
          <p className="mt-[15px]">Not: GPT bölüm stili, önceki Windows sürümlerinin tümü tarafından tanınmaz.</p>
          <div className="mt-[30px] flex justify-end gap-[11px]">
            <button type="submit" className="h-[22px] w-[73px] border border-[#0078d7] bg-[#e5f1fb]">
              Tamam
            </button>
            <button type="button" className="h-[22px] w-[73px] border border-[#adadad] bg-[#e1e1e1]">
              İptal
            </button>
          </div>
        </div>
      </form>
    </div>
  );
}

const taskbarApps: { icon: IconName; label: string; running?: boolean; active?: boolean }[] = [
  { icon: 'panel', label: 'Denetim Masası', running: true },
  { icon: 'explorer', label: 'Dosya Gezgini', running: true },
  { icon: 'store', label: 'Microsoft Store' },
  { icon: 'steam', label: 'Steam' },
  { icon: 'redGame', label: 'Oyun' },
  { icon: 'edge', label: 'Microsoft Edge', running: true },
  { icon: 'opera', label: 'Opera GX', running: true },
  { icon: 'manager', label: 'Bilgisayar Yönetimi', running: true, active: true },
  { icon: 'counter', label: 'FPS', running: true },
  { icon: 'device', label: 'Aygıt Yöneticisi', running: true },
  { icon: 'settings', label: 'Ayarlar', running: true },
];

function Taskbar() {
  return (
    <footer className="flex h-[31px] items-stretch bg-linear-to-r from-[#1a1d20] from-30% via-[#3a3b3a] via-60% to-[#1b1e20] to-85% text-white">
      <div className="mr-[3px] flex">
        <button className="flex w-9 items-center justify-center" aria-label="Başlat">
          <Icon name="start" />
        </button>
        <button className="flex w-9 items-center justify-center" aria-label="Ara">
          <Icon name="search" />
        </button>
        <button className="flex w-9 items-center justify-center" aria-label="Görev Görünümü">
          <Icon name="taskView" />
        </button>
      </div>
      <div className="flex gap-px">
        {taskbarApps.map((app) => (
          <button
            key={app.label}
            aria-label={app.label}
            className={clsx('flex w-9 flex-col items-center justify-between', app.active && 'bg-[#4b4d4d]')}
          >
            <span className="flex flex-1 items-center pt-[2px]">
              <Icon name={app.icon} />
            </span>
            <span className={clsx('h-[2px]', app.active ? 'w-9' : 'w-7', app.running && 'bg-[#76b9ed]')} />
          </button>
        ))}
      </div>
      <div className="ml-auto flex items-center">
        <button className="flex w-6 justify-center" aria-label="Gizli simgeler">
          <svg viewBox="0 0 12 7" className="h-[7px] w-3">
            <path d="M.5 6.500 6 1l5.500 5.500" fill="none" stroke="#fff" strokeWidth="1.200" />
          </svg>
        </button>
        <button className="flex w-6 justify-center" aria-label="USB">
          <svg viewBox="0 0 16 16" className="size-4" fill="none" stroke="#fff">
            <path d="M4.500 5V.5h6V5M3 5.500h9M3.500 5.500v10h6M11.500 5.500v6" />
            <path d="M6 2.500h1M8 2.500h1" />
            <path d="M9 13l2 2 4-4" stroke="#aaa" />
          </svg>
        </button>
        <button className="flex w-6 justify-center" aria-label="Ağ">
          <svg viewBox="0 0 16 16" className="size-4" fill="none" stroke="#fff">
            <path d="M5 2.500h10.500v8H3.500V7M9.500 10.500v4M6 14.500h7M.5 2.500h4v4h-4zM2.500 6.500v5" />
          </svg>
        </button>
        <button className="flex w-6 justify-center" aria-label="Ses">
          <svg viewBox="0 0 16 16" className="size-4" fill="none" stroke="#fff">
            <path d="M.5 6h2L6 2.500v11L2.500 10h-2zM8 6q1.500 2 0 4M10 4.500q3 3.500 0 7M12.500 2.500q4.500 5.500 0 11" />
          </svg>
        </button>
        <span className="ml-[7px]">TUR</span>
        <time className="ml-[13px]">21:41</time>
        <button className="ml-[15px]" aria-label="Eylem merkezi">
          <svg viewBox="0 0 16 16" className="size-4" fill="none" stroke="#fff">
            <path d="M.5 1.500h15v11H10l-2 2.500-2-2.500H.5z" />
          </svg>
        </button>
        <span className="ml-5 h-full w-[5px] border-l border-[#777]" />
      </div>
    </footer>
  );
}

export default function App() {
  return (
    <main className="flex min-h-screen flex-col bg-[#2f3133] font-['Roboto',sans-serif] text-[12px] leading-4 text-black">
      <div className="grid flex-1 grid-cols-[413px_minmax(0,1fr)] gap-[2px] px-px pt-px">
        <Window title="Aygıt Yöneticisi" icon="device" tools={deviceTools}>
          <div className={clsx('flex-1 bg-white', SUNKEN)}>
            <ul className="pl-[3px]">
              <TreeNode item={deviceTree} />
            </ul>
          </div>
        </Window>

        <Window title="Bilgisayar Yönetimi" icon="manager" tools={managementTools}>
          <div className="flex w-[190px] shrink-0 flex-col overflow-hidden border border-[#828790] bg-white pt-px">
            <div className="mr-[2px] flex-1 overflow-hidden pl-1">
              <div className="flex h-[18px] items-center gap-[5px] whitespace-nowrap">
                <Icon name="manager" />
                Bilgisayar Yönetimi (Yerel)
              </div>
              <ul>
                {managementTree.map((item) => (
                  <TreeNode key={item.label} item={item} />
                ))}
              </ul>
            </div>
            <ScrollBar thumb="89%" />
          </div>
          <DiskPane />
          <ActionsPane />
          <InitializeDiskDialog />
        </Window>
      </div>
      <Taskbar />
    </main>
  );
}
